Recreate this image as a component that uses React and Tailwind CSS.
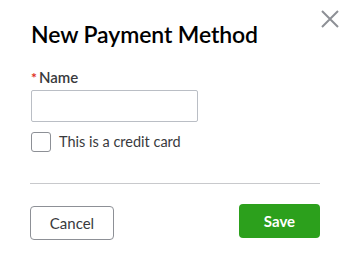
export default function App() {
  return (
    <div className="w-[350px] h-[270px] bg-white relative" style={{ fontFamily: 'Lato, "Open Sans", sans-serif' }}>
      <button className="absolute left-[320px] top-[9px] w-[20px] h-[20px] flex items-center justify-center">
        <svg width="18" height="18" viewBox="0 0 18 18">
          <path d="M1 1 L17 17 M17 1 L1 17" stroke="#8d9096" strokeWidth="2" />
        </svg>
      </button>
      <div className="pl-[31px] pr-[30px] pt-[20px]">
        <h1 className="text-[23px] leading-[28px] font-semibold text-[#000] tracking-[-0.1px]">New Payment Method</h1>
        <div className="mt-[20px] h-[18px] flex items-baseline text-[15px] leading-[18px] text-[#393a3d] font-semibold">
          <span className="text-[#e0301e] text-[14px] font-bold mr-[2px]">*</span>
          <span>Name</span>
        </div>
        <input className="mt-[4px] block w-[167px] h-[32px] border border-[#babec5] rounded-[2px] outline-none px-2" />
        <label className="mt-[10px] h-[20px] flex items-center gap-[8px]">
          <span className="w-[20px] h-[20px] border border-[#8d9096] rounded-[3px] bg-white" />
          <span className="text-[14.5px] text-[#393a3d]">This is a credit card</span>
        </label>
        <div className="mt-[31px] -ml-px h-px bg-[#c8c9cc]" />
        <div className="mt-[20px] -ml-px flex justify-between items-start">
          <button className="mt-[2px] w-[84px] h-[34px] border border-[#8d9096] rounded-[4px] text-[15px] text-[#393a3d] bg-white">Cancel</button>
          <button className="w-[81px] h-[34px] rounded-[4px] bg-[#2ca01c] text-white text-[15px] font-bold">Save</button>
        </div>
      </div>
    </div>
  );
}
